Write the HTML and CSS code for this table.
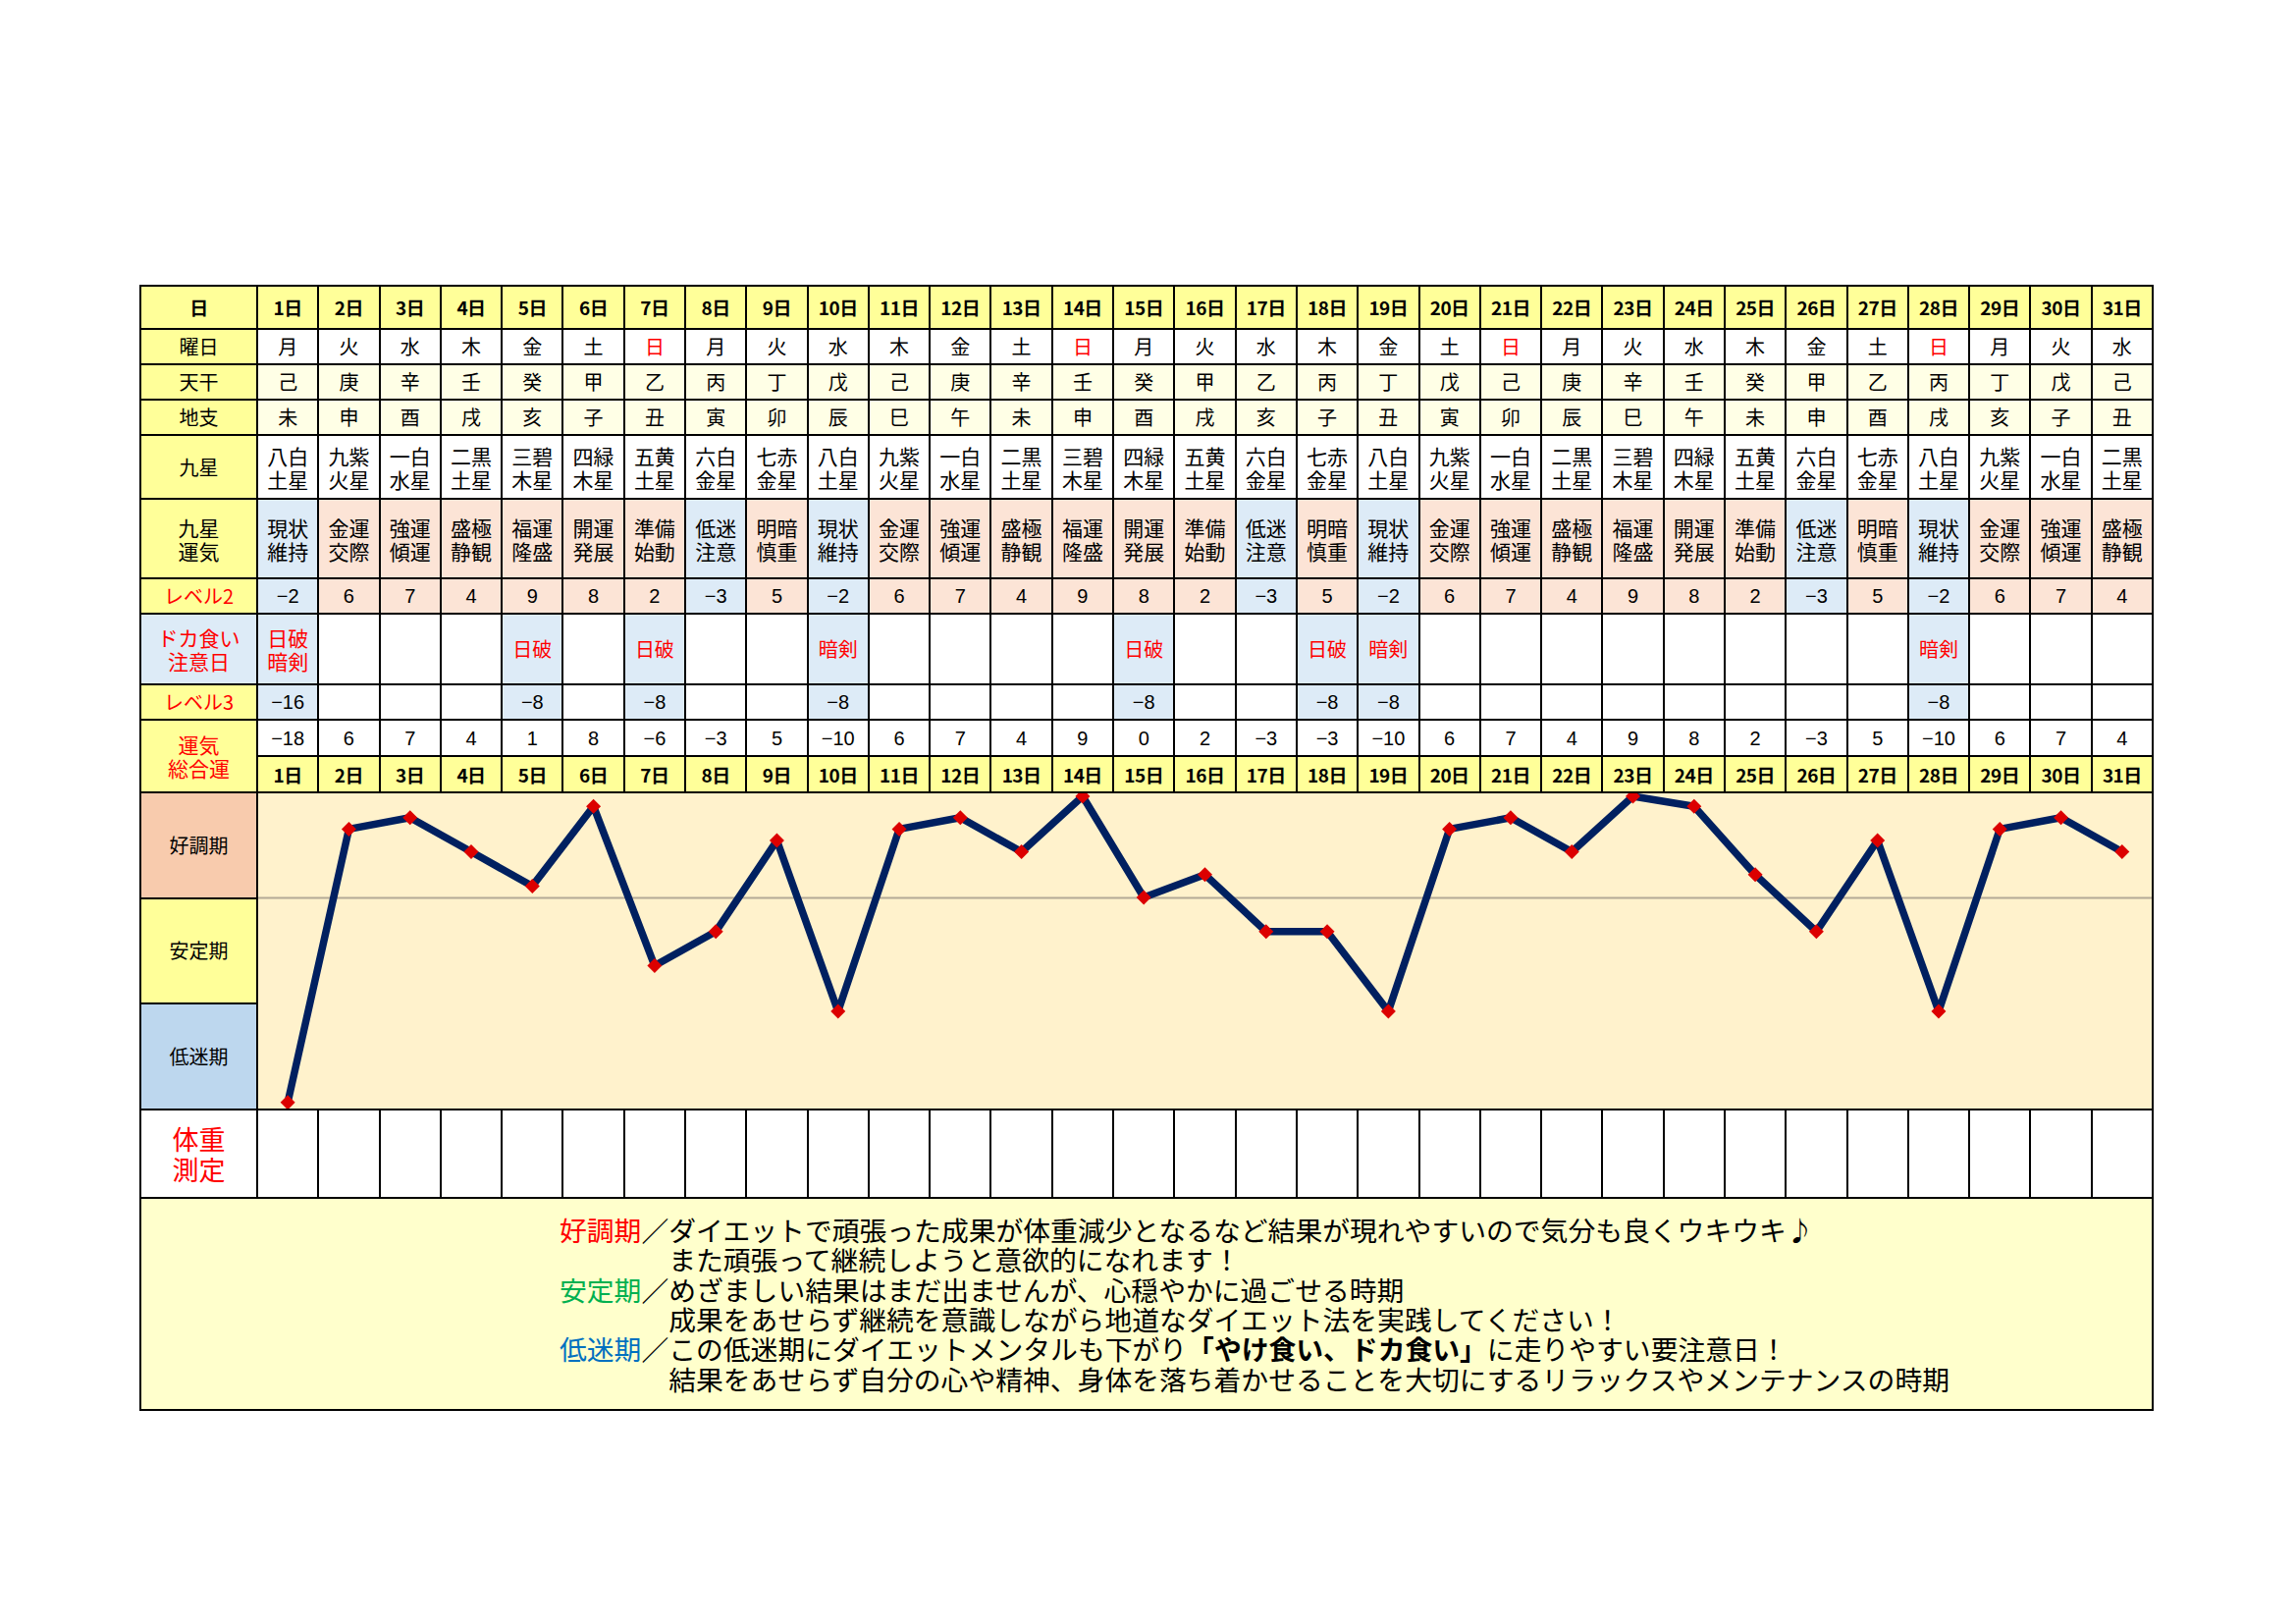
FILE: index.html
```html
<!DOCTYPE html>
<html lang="ja">
<head>
<meta charset="utf-8">
<title>ダイエット運気カレンダー</title>
<link rel="stylesheet" href="styles.css">
</head>
<body>
<div class="sheet">
  <!-- 日 -->
  <div class="c hd">日</div>
  <div class="c hd">1日</div><div class="c hd">2日</div><div class="c hd">3日</div><div class="c hd">4日</div><div class="c hd">5日</div><div class="c hd">6日</div><div class="c hd">7日</div><div class="c hd">8日</div><div class="c hd">9日</div><div class="c hd">10日</div><div class="c hd">11日</div><div class="c hd">12日</div><div class="c hd">13日</div><div class="c hd">14日</div><div class="c hd">15日</div><div class="c hd">16日</div><div class="c hd">17日</div><div class="c hd">18日</div><div class="c hd">19日</div><div class="c hd">20日</div><div class="c hd">21日</div><div class="c hd">22日</div><div class="c hd">23日</div><div class="c hd">24日</div><div class="c hd">25日</div><div class="c hd">26日</div><div class="c hd">27日</div><div class="c hd">28日</div><div class="c hd">29日</div><div class="c hd">30日</div><div class="c hd">31日</div>
  <!-- 曜日 -->
  <div class="c lb">曜日</div>
  <div class="c">月</div><div class="c">火</div><div class="c">水</div><div class="c">木</div><div class="c">金</div><div class="c">土</div><div class="c red">日</div><div class="c">月</div><div class="c">火</div><div class="c">水</div><div class="c">木</div><div class="c">金</div><div class="c">土</div><div class="c red">日</div><div class="c">月</div><div class="c">火</div><div class="c">水</div><div class="c">木</div><div class="c">金</div><div class="c">土</div><div class="c red">日</div><div class="c">月</div><div class="c">火</div><div class="c">水</div><div class="c">木</div><div class="c">金</div><div class="c">土</div><div class="c red">日</div><div class="c">月</div><div class="c">火</div><div class="c">水</div>
  <!-- 天干 -->
  <div class="c lb">天干</div>
  <div class="c ly">己</div><div class="c ly">庚</div><div class="c ly">辛</div><div class="c ly">壬</div><div class="c ly">癸</div><div class="c ly">甲</div><div class="c ly">乙</div><div class="c ly">丙</div><div class="c ly">丁</div><div class="c ly">戊</div><div class="c ly">己</div><div class="c ly">庚</div><div class="c ly">辛</div><div class="c ly">壬</div><div class="c ly">癸</div><div class="c ly">甲</div><div class="c ly">乙</div><div class="c ly">丙</div><div class="c ly">丁</div><div class="c ly">戊</div><div class="c ly">己</div><div class="c ly">庚</div><div class="c ly">辛</div><div class="c ly">壬</div><div class="c ly">癸</div><div class="c ly">甲</div><div class="c ly">乙</div><div class="c ly">丙</div><div class="c ly">丁</div><div class="c ly">戊</div><div class="c ly">己</div>
  <!-- 地支 -->
  <div class="c lb">地支</div>
  <div class="c ly">未</div><div class="c ly">申</div><div class="c ly">酉</div><div class="c ly">戌</div><div class="c ly">亥</div><div class="c ly">子</div><div class="c ly">丑</div><div class="c ly">寅</div><div class="c ly">卯</div><div class="c ly">辰</div><div class="c ly">巳</div><div class="c ly">午</div><div class="c ly">未</div><div class="c ly">申</div><div class="c ly">酉</div><div class="c ly">戌</div><div class="c ly">亥</div><div class="c ly">子</div><div class="c ly">丑</div><div class="c ly">寅</div><div class="c ly">卯</div><div class="c ly">辰</div><div class="c ly">巳</div><div class="c ly">午</div><div class="c ly">未</div><div class="c ly">申</div><div class="c ly">酉</div><div class="c ly">戌</div><div class="c ly">亥</div><div class="c ly">子</div><div class="c ly">丑</div>
  <!-- 九星 -->
  <div class="c lb">九星</div>
  <div class="c t2">八白<br>土星</div><div class="c t2">九紫<br>火星</div><div class="c t2">一白<br>水星</div><div class="c t2">二黒<br>土星</div><div class="c t2">三碧<br>木星</div><div class="c t2">四緑<br>木星</div><div class="c t2">五黄<br>土星</div><div class="c t2">六白<br>金星</div><div class="c t2">七赤<br>金星</div>
  <div class="c t2">八白<br>土星</div><div class="c t2">九紫<br>火星</div><div class="c t2">一白<br>水星</div><div class="c t2">二黒<br>土星</div><div class="c t2">三碧<br>木星</div><div class="c t2">四緑<br>木星</div><div class="c t2">五黄<br>土星</div><div class="c t2">六白<br>金星</div><div class="c t2">七赤<br>金星</div>
  <div class="c t2">八白<br>土星</div><div class="c t2">九紫<br>火星</div><div class="c t2">一白<br>水星</div><div class="c t2">二黒<br>土星</div><div class="c t2">三碧<br>木星</div><div class="c t2">四緑<br>木星</div><div class="c t2">五黄<br>土星</div><div class="c t2">六白<br>金星</div><div class="c t2">七赤<br>金星</div>
  <div class="c t2">八白<br>土星</div><div class="c t2">九紫<br>火星</div><div class="c t2">一白<br>水星</div><div class="c t2">二黒<br>土星</div>
  <!-- 九星運気 -->
  <div class="c lb t2">九星<br>運気</div>
  <div class="c t2 bl">現状<br>維持</div><div class="c t2 pk">金運<br>交際</div><div class="c t2 pk">強運<br>傾運</div><div class="c t2 pk">盛極<br>静観</div><div class="c t2 pk">福運<br>隆盛</div><div class="c t2 pk">開運<br>発展</div><div class="c t2 pk">準備<br>始動</div><div class="c t2 bl">低迷<br>注意</div><div class="c t2 pk">明暗<br>慎重</div>
  <div class="c t2 bl">現状<br>維持</div><div class="c t2 pk">金運<br>交際</div><div class="c t2 pk">強運<br>傾運</div><div class="c t2 pk">盛極<br>静観</div><div class="c t2 pk">福運<br>隆盛</div><div class="c t2 pk">開運<br>発展</div><div class="c t2 pk">準備<br>始動</div><div class="c t2 bl">低迷<br>注意</div><div class="c t2 pk">明暗<br>慎重</div>
  <div class="c t2 bl">現状<br>維持</div><div class="c t2 pk">金運<br>交際</div><div class="c t2 pk">強運<br>傾運</div><div class="c t2 pk">盛極<br>静観</div><div class="c t2 pk">福運<br>隆盛</div><div class="c t2 pk">開運<br>発展</div><div class="c t2 pk">準備<br>始動</div><div class="c t2 bl">低迷<br>注意</div><div class="c t2 pk">明暗<br>慎重</div>
  <div class="c t2 bl">現状<br>維持</div><div class="c t2 pk">金運<br>交際</div><div class="c t2 pk">強運<br>傾運</div><div class="c t2 pk">盛極<br>静観</div>
  <!-- レベル2 -->
  <div class="c lb red">レベル2</div>
  <div class="c n bl">&minus;2</div><div class="c n pk">6</div><div class="c n pk">7</div><div class="c n pk">4</div><div class="c n pk">9</div><div class="c n pk">8</div><div class="c n pk">2</div><div class="c n bl">&minus;3</div><div class="c n pk">5</div>
  <div class="c n bl">&minus;2</div><div class="c n pk">6</div><div class="c n pk">7</div><div class="c n pk">4</div><div class="c n pk">9</div><div class="c n pk">8</div><div class="c n pk">2</div><div class="c n bl">&minus;3</div><div class="c n pk">5</div>
  <div class="c n bl">&minus;2</div><div class="c n pk">6</div><div class="c n pk">7</div><div class="c n pk">4</div><div class="c n pk">9</div><div class="c n pk">8</div><div class="c n pk">2</div><div class="c n bl">&minus;3</div><div class="c n pk">5</div>
  <div class="c n bl">&minus;2</div><div class="c n pk">6</div><div class="c n pk">7</div><div class="c n pk">4</div>
  <!-- ドカ食い注意日 -->
  <div class="c bl red t2">ドカ食い<br>注意日</div>
  <div class="c bl red t2">日破<br>暗剣</div><div class="c"></div><div class="c"></div><div class="c"></div><div class="c bl red">日破</div><div class="c"></div><div class="c bl red">日破</div><div class="c"></div><div class="c"></div><div class="c bl red">暗剣</div>
  <div class="c"></div><div class="c"></div><div class="c"></div><div class="c"></div><div class="c bl red">日破</div><div class="c"></div><div class="c"></div><div class="c bl red">日破</div><div class="c bl red">暗剣</div><div class="c"></div>
  <div class="c"></div><div class="c"></div><div class="c"></div><div class="c"></div><div class="c"></div><div class="c"></div><div class="c"></div><div class="c bl red">暗剣</div><div class="c"></div><div class="c"></div><div class="c"></div>
  <!-- レベル3 -->
  <div class="c lb red">レベル3</div>
  <div class="c n bl">&minus;16</div><div class="c"></div><div class="c"></div><div class="c"></div><div class="c n bl">&minus;8</div><div class="c"></div><div class="c n bl">&minus;8</div><div class="c"></div><div class="c"></div><div class="c n bl">&minus;8</div>
  <div class="c"></div><div class="c"></div><div class="c"></div><div class="c"></div><div class="c n bl">&minus;8</div><div class="c"></div><div class="c"></div><div class="c n bl">&minus;8</div><div class="c n bl">&minus;8</div><div class="c"></div>
  <div class="c"></div><div class="c"></div><div class="c"></div><div class="c"></div><div class="c"></div><div class="c"></div><div class="c"></div><div class="c n bl">&minus;8</div><div class="c"></div><div class="c"></div><div class="c"></div>
  <!-- 運気総合運 -->
  <div class="c lb red t2 span2">運気<br>総合運</div>
  <div class="c n">&minus;18</div><div class="c n">6</div><div class="c n">7</div><div class="c n">4</div><div class="c n">1</div><div class="c n">8</div><div class="c n">&minus;6</div><div class="c n">&minus;3</div><div class="c n">5</div><div class="c n">&minus;10</div>
  <div class="c n">6</div><div class="c n">7</div><div class="c n">4</div><div class="c n">9</div><div class="c n">0</div><div class="c n">2</div><div class="c n">&minus;3</div><div class="c n">&minus;3</div><div class="c n">&minus;10</div><div class="c n">6</div>
  <div class="c n">7</div><div class="c n">4</div><div class="c n">9</div><div class="c n">8</div><div class="c n">2</div><div class="c n">&minus;3</div><div class="c n">5</div><div class="c n">&minus;10</div><div class="c n">6</div><div class="c n">7</div><div class="c n">4</div>
  <div class="c hd">1日</div><div class="c hd">2日</div><div class="c hd">3日</div><div class="c hd">4日</div><div class="c hd">5日</div><div class="c hd">6日</div><div class="c hd">7日</div><div class="c hd">8日</div><div class="c hd">9日</div><div class="c hd">10日</div><div class="c hd">11日</div><div class="c hd">12日</div><div class="c hd">13日</div><div class="c hd">14日</div><div class="c hd">15日</div><div class="c hd">16日</div><div class="c hd">17日</div><div class="c hd">18日</div><div class="c hd">19日</div><div class="c hd">20日</div><div class="c hd">21日</div><div class="c hd">22日</div><div class="c hd">23日</div><div class="c hd">24日</div><div class="c hd">25日</div><div class="c hd">26日</div><div class="c hd">27日</div><div class="c hd">28日</div><div class="c hd">29日</div><div class="c hd">30日</div><div class="c hd">31日</div>
  <!-- chart -->
  <div class="c band good">好調期</div>
  <div class="chart">
    <svg viewBox="0 0 1929 320.5" preserveAspectRatio="none" xmlns="http://www.w3.org/2000/svg">
      <defs>
        <marker id="dia" viewBox="-8 -8 16 16" markerWidth="16" markerHeight="16" markerUnits="userSpaceOnUse" refX="0" refY="0">
          <path d="M0 -7.5 L7.5 0 L0 7.5 L-7.5 0 Z" fill="#dc0000"/>
        </marker>
      </defs>
      <line x1="0" y1="106.5" x2="1929" y2="106.5" stroke="#b4aa96" stroke-width="2"/>
      <polyline fill="none" stroke="#002060" stroke-width="7.5" stroke-linejoin="round" marker-start="url(#dia)" marker-mid="url(#dia)" marker-end="url(#dia)"
        points="30.15,314.8 92.44,36.4 154.73,24.8 217.02,59.6 279.31,94.4 341.6,13.2 403.89,175.6 466.18,140.8 528.47,48 590.76,222 653.05,36.4 715.34,24.8 777.63,59.6 839.92,3 902.21,106 964.5,82.8 1026.79,140.8 1089.08,140.8 1151.37,222 1213.66,36.4 1275.95,24.8 1338.24,59.6 1400.53,3 1462.82,13.2 1525.11,82.8 1587.4,140.8 1649.69,48 1711.98,222 1774.27,36.4 1836.56,24.8 1898.85,59.6"/>
    </svg>
  </div>
  <div class="c band steady">安定期</div>
  <div class="c band low">低迷期</div>
  <!-- 体重測定 -->
  <div class="c red big">体重<br>測定</div>
  <div class="c"></div><div class="c"></div><div class="c"></div><div class="c"></div><div class="c"></div><div class="c"></div><div class="c"></div><div class="c"></div><div class="c"></div><div class="c"></div>
  <div class="c"></div><div class="c"></div><div class="c"></div><div class="c"></div><div class="c"></div><div class="c"></div><div class="c"></div><div class="c"></div><div class="c"></div><div class="c"></div>
  <div class="c"></div><div class="c"></div><div class="c"></div><div class="c"></div><div class="c"></div><div class="c"></div><div class="c"></div><div class="c"></div><div class="c"></div><div class="c"></div><div class="c"></div>
  <!-- notes -->
  <div class="notes">
    <p><span class="k-good">好調期</span>／ダイエットで頑張った成果が体重減少となるなど結果が現れやすいので気分も良くウキウキ♪</p>
    <p class="ind">また頑張って継続しようと意欲的になれます！</p>
    <p><span class="k-steady">安定期</span>／めざましい結果はまだ出ませんが、心穏やかに過ごせる時期</p>
    <p class="ind">成果をあせらず継続を意識しながら地道なダイエット法を実践してください！</p>
    <p><span class="k-low">低迷期</span>／この低迷期にダイエットメンタルも下がり<b>「やけ食い、ドカ食い」</b>に走りやすい要注意日！</p>
    <p class="ind">結果をあせらず自分の心や精神、身体を落ち着かせることを大切にするリラックスやメンテナンスの時期</p>
  </div>
</div>
</body>
</html>
```

FILE: styles.css
```css
html, body {
  margin: 0;
  padding: 0;
  background: #ffffff;
}

body {
  width: 2339px;
  height: 1654px;
  font-family: "Noto Sans CJK JP", "Noto Sans CJK SC", sans-serif;
  color: #000000;
  overflow: hidden;
}

.sheet {
  margin: 290px 0 0 142px;
  width: 2052px;
  box-sizing: border-box;
  padding: 2px;
  display: grid;
  gap: 2px;
  background: #000000;
  grid-template-columns: 117px repeat(31, 1fr);
  grid-template-rows: 42px 34px 34px 34px 63px 79px 34px 70px 34px 35px 35px 105.5px 105.5px 105.5px 88.5px 214px;
}

.c {
  display: flex;
  align-items: center;
  justify-content: center;
  text-align: center;
  background: #ffffff;
  font-size: 20px;
  line-height: 24px;
  white-space: nowrap;
  overflow: hidden;
}

.hd {
  background: #ffff99;
  font-weight: 700;
  font-size: 19px;
  letter-spacing: -0.5px;
}

.lb {
  background: #ffff99;
}

.ly {
  background: #ffffe6;
}

.pk {
  background: #fce4d6;
}

.bl {
  background: #ddebf7;
}

.red {
  color: #ff0000;
}

.t2 {
  font-size: 21px;
  line-height: 24px;
}

.n {
  font-family: "Liberation Sans", "Noto Sans CJK JP", sans-serif;
  font-size: 20px;
}

.span2 {
  grid-row: span 2;
}

.band {
  font-size: 20px;
}

.good {
  background: #f8cbad;
}

.steady {
  background: #ffff99;
}

.low {
  background: #bdd7ee;
}

.chart {
  grid-column: 2 / span 31;
  grid-row: span 3;
  background: #fff2cc;
  overflow: hidden;
}

.chart svg {
  display: block;
  width: 100%;
  height: 100%;
}

.big {
  font-size: 27px;
  line-height: 31px;
}

.notes {
  grid-column: 1 / -1;
  background: #ffffcc;
  display: flex;
  flex-direction: column;
  justify-content: center;
  padding-left: 426px;
  font-size: 27.8px;
  line-height: 30.3px;
  white-space: nowrap;
}

.notes p {
  margin: 0;
}

.notes .ind {
  padding-left: 4em;
}

.notes b {
  font-weight: 700;
}

.k-good {
  color: #ff0000;
}

.k-steady {
  color: #00b050;
}

.k-low {
  color: #0070c0;
}
```
